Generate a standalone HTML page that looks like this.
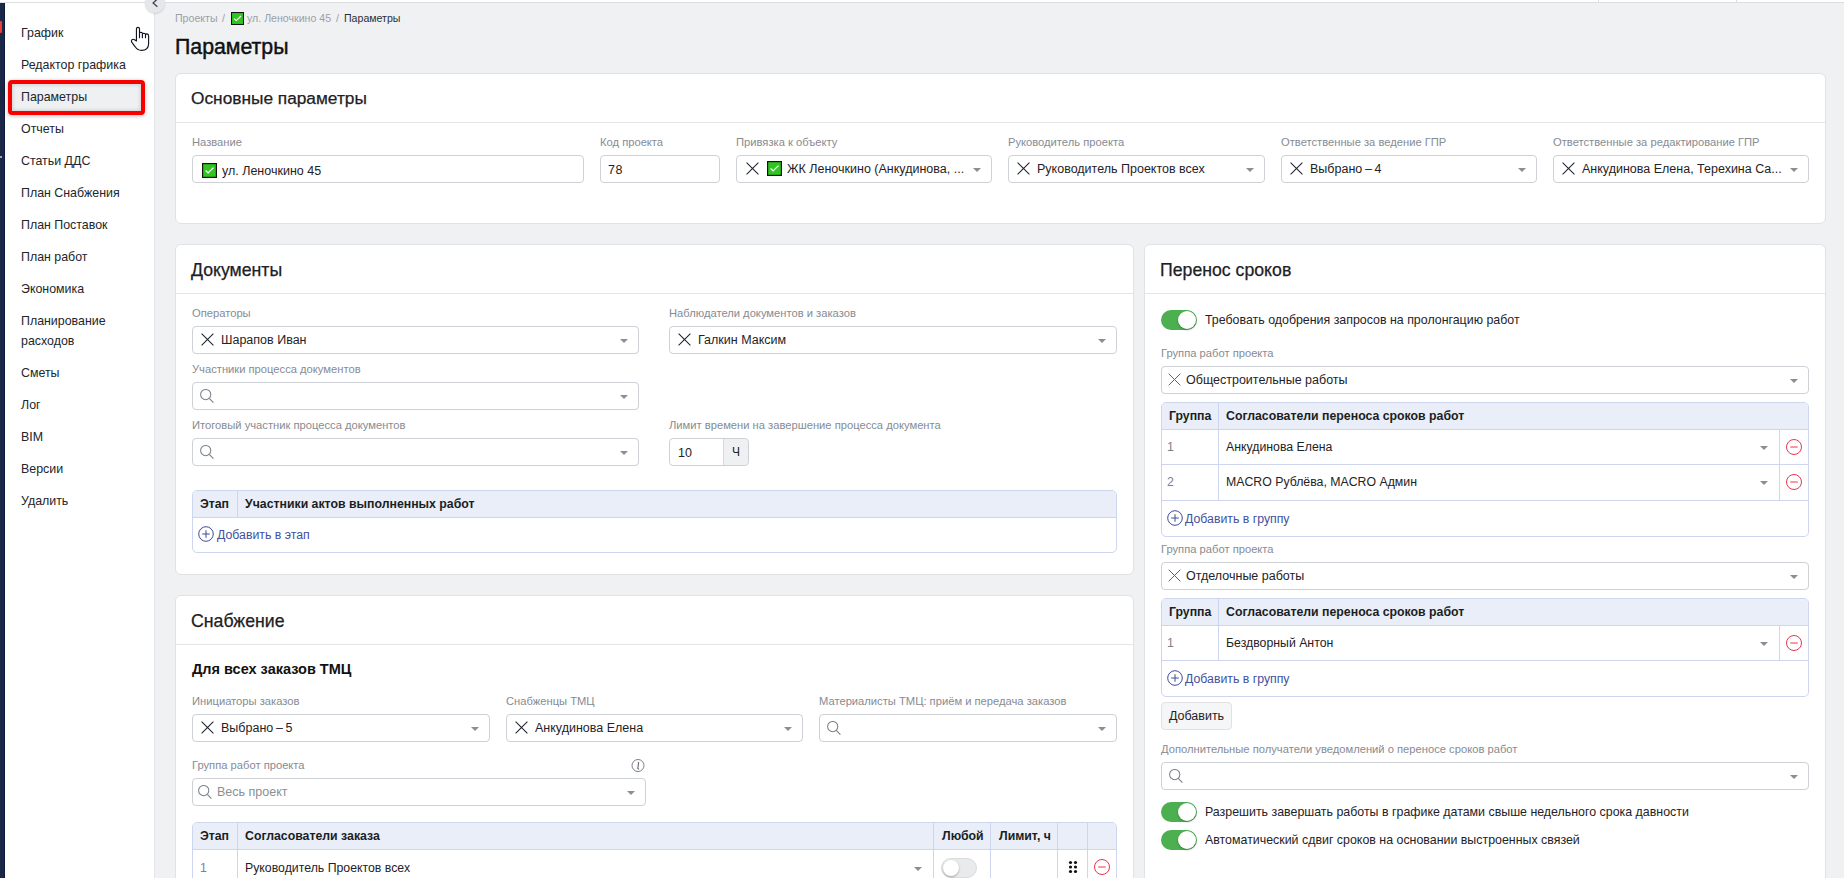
<!DOCTYPE html>
<html><head><meta charset="utf-8">
<style>
*{box-sizing:border-box;margin:0;padding:0}
html,body{width:1844px;height:878px;overflow:hidden}
body{position:relative;background:#f0f1f3;font-family:"Liberation Sans",sans-serif;color:#1f2226}
.a{position:absolute}
.topbar{left:0;top:0;width:1844px;height:3px;background:#fff;border-bottom:1px solid #dcdee2}
.dark{left:0;top:3px;width:5px;height:875px;background:#1b2746;border-right:1px solid #0e1a3c}
.side{left:5px;top:3px;width:150px;height:875px;background:#fff;border-right:1px solid #e3e5e8}
.nav{position:absolute;left:21px;margin-top:1px;font-size:12.4px;color:#22262b;line-height:20px;white-space:nowrap}
.card{position:absolute;background:#fff;border:1px solid #e0e2e6;border-radius:6px}
.ctitle{position:absolute;left:15px;top:13.5px;line-height:22px;font-size:17.7px;color:#1d2024;-webkit-text-stroke:0.25px #1d2024;white-space:nowrap}
.csep{position:absolute;left:0;right:0;top:48px;height:1px;background:#e3e5e8}
.lbl{position:absolute;font-size:11.2px;color:#868b93;white-space:nowrap;line-height:12px}
.inp{position:absolute;height:28px;border:1px solid #cdd0d5;border-radius:4px;background:#fff;display:flex;align-items:center;font-size:12.5px;color:#1f2226;white-space:nowrap;overflow:hidden}
.caret{position:absolute;right:10px;top:50%;margin-top:-1px;width:0;height:0;border-left:4px solid transparent;border-right:4px solid transparent;border-top:4px solid #8a8e96}
.xi{display:inline-block;width:13px;height:13px;margin-left:8px;margin-right:7px;flex:none;position:relative;top:-1px}
.chk{display:inline-block;width:15px;height:15px;flex:none}
.sr{display:inline-block;width:14px;height:14px;margin-left:7px;margin-top:-1px;flex:none}
.tbl{position:absolute;border:1px solid #cdd6ee;border-radius:5px;background:#fff;overflow:hidden}
.th{position:absolute;left:0;right:0;top:0;background:#e9eef8;border-bottom:1px solid #cdd6ee}
.vl{position:absolute;width:1px;background:#cdd6ee}
.hl{position:absolute;height:1px;background:#cdd6ee;left:0;right:0}
.tht{position:absolute;font-size:12.3px;font-weight:700;color:#1b1e22;white-space:nowrap;line-height:14px}
.td{position:absolute;font-size:12.3px;color:#1f2226;white-space:nowrap;line-height:14px}
.tdn{position:absolute;font-size:12.3px;color:#7d828a;white-space:nowrap;line-height:14px}
.lnk{position:absolute;font-size:12.3px;color:#4250a0;white-space:nowrap;line-height:14px}
.tog{position:absolute;width:36px;height:20px;border-radius:10px;background:#4caf50}
.tog i{position:absolute;right:1px;top:1px;width:18px;height:18px;border-radius:50%;background:#fff;box-shadow:0 1px 2px rgba(0,0,0,.3)}
.togoff{position:absolute;width:36px;height:20px;border-radius:10px;background:#e9eaec;border:1px solid #d9dbdf}
.togoff i{position:absolute;left:1px;top:1px;width:16px;height:16px;border-radius:50%;background:#fff;box-shadow:0 1px 2px rgba(0,0,0,.3)}
.ttxt{position:absolute;font-size:12.4px;color:#1f2226;white-space:nowrap;line-height:14px}
</style></head><body>
<svg width="0" height="0" style="position:absolute">
<defs>
<symbol id="ix" viewBox="0 0 13 13"><path d="M0.6 0.6 L12.4 12.4 M12.4 0.6 L0.6 12.4" stroke="#1d2230" stroke-width="1.05" fill="none"/></symbol>
<symbol id="ixl" viewBox="0 0 13 13"><path d="M0.7 0.7 L12.3 12.3 M12.3 0.7 L0.7 12.3" stroke="#5d6168" stroke-width="1" fill="none"/></symbol>
<symbol id="ichk" viewBox="0 0 15 15"><rect x="0.6" y="0.6" width="13.8" height="13.8" fill="#2fc71f" stroke="#141414" stroke-width="1.2"/><path d="M3.6 7.6 L6.1 9.9 L11.5 4.6" fill="none" stroke="#fff" stroke-width="1.3"/></symbol>
<symbol id="isr" viewBox="0 0 14 14"><circle cx="5.7" cy="5.6" r="5.1" fill="none" stroke="#7d8189" stroke-width="1.05"/><path d="M9.3 9.3 L13.4 13.6" stroke="#7d8189" stroke-width="1.1"/></symbol>
<symbol id="iplus" viewBox="0 0 16 16"><circle cx="8" cy="8" r="7.3" fill="none" stroke="#3f4b96" stroke-width="1"/><path d="M8 4.2 V11.8 M4.2 8 H11.8" stroke="#3f4b96" stroke-width="1"/></symbol>
<symbol id="iminus" viewBox="0 0 16 16"><circle cx="8" cy="8" r="7.5" fill="none" stroke="#e8344e" stroke-width="1"/><path d="M4.3 8 H11.7" stroke="#e8344e" stroke-width="1.1"/></symbol>
</defs></svg>
<div class="a topbar"></div>
<div class="a dark"></div>
<div class="a side"></div>
<div class="a" style="left:8px;top:80px;width:137px;height:35px;border:4px solid #f80000;border-radius:4px;box-shadow:0 1px 4px rgba(0,0,0,.25)"></div>
<div class="a" style="left:12px;top:84px;width:129px;height:27px;background:#eff0f2;box-shadow:inset 0 0 4px rgba(0,0,0,.2)"></div>
<div class="nav" style="top:22px">График</div>
<div class="nav" style="top:54px">Редактор графика</div>
<div class="nav" style="top:86px">Параметры</div>
<div class="nav" style="top:118px">Отчеты</div>
<div class="nav" style="top:150px">Статьи ДДС</div>
<div class="nav" style="top:182px">План Снабжения</div>
<div class="nav" style="top:214px">План Поставок</div>
<div class="nav" style="top:246px">План работ</div>
<div class="nav" style="top:278px">Экономика</div>
<div class="nav" style="top:310px">Планирование<br>расходов</div>
<div class="nav" style="top:362px">Сметы</div>
<div class="nav" style="top:394px">Лог</div>
<div class="nav" style="top:426px">BIM</div>
<div class="nav" style="top:458px">Версии</div>
<div class="nav" style="top:490px">Удалить</div>
<div class="a" style="left:0;top:21px;width:2px;height:12px;background:#ef3b36;border-radius:0 1px 1px 0"></div><div class="a" style="left:0;top:156px;width:2px;height:2px;background:#a0a6b4"></div>
<div class="a" style="left:145px;top:-7px;width:20px;height:20px;border-radius:50%;background:#e6e7ea;box-shadow:0 1px 2px rgba(0,0,0,.15)"></div>
<svg class="a" style="left:151px;top:-2px" width="9" height="11" viewBox="0 0 9 11"><path d="M6.4 1 L2.1 5 L6.4 8.8" fill="none" stroke="#45484f" stroke-width="1.35"/></svg>
<div class="a" style="left:175px;top:12px;font-size:10.6px;color:#9ba0a8;white-space:nowrap;line-height:13px">Проекты</div>
<div class="a" style="left:222px;top:12px;font-size:10.6px;color:#9ba0a8;white-space:nowrap;line-height:13px">/</div>
<svg class="a" style="left:231px;top:12px;width:13px;height:13px"><use href="#ichk"/></svg>
<div class="a" style="left:247px;top:12px;font-size:10.6px;color:#9ba0a8;white-space:nowrap;line-height:13px">ул. Леночкино 45</div>
<div class="a" style="left:336px;top:12px;font-size:10.6px;color:#9ba0a8;white-space:nowrap;line-height:13px">/</div>
<div class="a" style="left:344px;top:12px;font-size:10.6px;color:#9ba0a8;white-space:nowrap;line-height:13px;color:#2b2f35">Параметры</div>
<div class="a" style="left:175px;top:33.5px;font-size:21.3px;color:#0f1114;-webkit-text-stroke:0.45px #0f1114;white-space:nowrap;line-height:26px">Параметры</div>
<div class="card" style="left:175px;top:73px;width:1651px;height:151px">
<div class="ctitle" style="font-size:17.3px;top:13px">Основные параметры</div><div class="csep"></div>
<div class="lbl" style="left:16px;top:62px;">Название</div>
<div class="inp" style="left:16px;top:81px;width:392px;height:28px;padding-top:3px"><span style="margin-left:9px;display:flex"><svg class="chk"><use href="#ichk"/></svg></span><span style="margin-left:5px">ул. Леночкино 45</span></div>
<div class="lbl" style="left:424px;top:62px;">Код проекта</div>
<div class="inp" style="left:424px;top:81px;width:120px;height:28px;padding-top:1px"><span style="margin-left:7px;letter-spacing:0.6px">78</span></div>
<div class="lbl" style="left:560px;top:62px;">Привязка к объекту</div>
<div class="inp" style="left:560px;top:81px;width:256px;height:28px;"><svg class="xi" style="margin-left:9px;margin-right:8px"><use href="#ix"/></svg><span style="display:flex;margin-top:-2px"><svg class="chk"><use href="#ichk"/></svg></span><span style="margin-left:5px">ЖК Леночкино (Анкудинова, ...</span><i class="caret"></i></div>
<div class="lbl" style="left:832px;top:62px;">Руководитель проекта</div>
<div class="inp" style="left:832px;top:81px;width:257px;height:28px;"><svg class="xi"><use href="#ix"/></svg><span>Руководитель Проектов всех</span><i class="caret"></i></div>
<div class="lbl" style="left:1105px;top:62px;">Ответственные за ведение ГПР</div>
<div class="inp" style="left:1105px;top:81px;width:256px;height:28px;"><svg class="xi"><use href="#ix"/></svg><span style="word-spacing:-0.8px">Выбрано – 4</span><i class="caret"></i></div>
<div class="lbl" style="left:1377px;top:62px;">Ответственные за редактирование ГПР</div>
<div class="inp" style="left:1377px;top:81px;width:256px;height:28px;"><svg class="xi"><use href="#ix"/></svg><span>Анкудинова Елена, Терехина Са...</span><i class="caret"></i></div>
</div>
<div class="card" style="left:175px;top:244px;width:959px;height:331px">
<div class="ctitle">Документы</div><div class="csep"></div>
<div class="lbl" style="left:16px;top:62px;">Операторы</div>
<div class="inp" style="left:16px;top:81px;width:447px;height:28px;"><svg class="xi"><use href="#ix"/></svg><span>Шарапов Иван</span><i class="caret"></i></div>
<div class="lbl" style="left:493px;top:62px;">Наблюдатели документов и заказов</div>
<div class="inp" style="left:493px;top:81px;width:448px;height:28px;"><svg class="xi"><use href="#ix"/></svg><span>Галкин Максим</span><i class="caret"></i></div>
<div class="lbl" style="left:16px;top:118px;">Участники процесса документов</div>
<div class="inp" style="left:16px;top:137px;width:447px;height:28px;"><svg class="sr"><use href="#isr"/></svg><i class="caret"></i></div>
<div class="lbl" style="left:16px;top:174px;">Итоговый участник процесса документов</div>
<div class="inp" style="left:16px;top:193px;width:447px;height:28px;"><svg class="sr"><use href="#isr"/></svg><i class="caret"></i></div>
<div class="lbl" style="left:493px;top:174px;">Лимит времени на завершение процесса документа</div>
<div class="inp" style="left:493px;top:193px;width:80px;padding-top:2px"><span style="margin-left:8px">10</span><div class="a" style="left:53px;top:-1px;width:26px;height:28px;background:#eff0f2;border:1px solid #d5d7dc;border-radius:0 4px 4px 0;text-align:center;line-height:26px;font-size:12px;top:-1px">Ч</div></div>
<div class="tbl" style="left:16px;top:245px;width:925px;height:63px"><div class="th" style="height:27px"></div><div class="vl" style="left:44px;top:0;height:26px"></div><div class="tht" style="left:7px;top:6px">Этап</div><div class="tht" style="left:52px;top:6px">Участники актов выполненных работ</div><svg class="a" style="left:5px;top:35px;width:16px;height:16px"><use href="#iplus"/></svg><div class="lnk" style="left:24px;top:37px">Добавить в этап</div></div>
</div>
<div class="card" style="left:1144px;top:244px;width:682px;height:700px">
<div class="ctitle">Перенос сроков</div><div class="csep"></div>
<div class="tog" style="left:16px;top:65px"><i></i></div><div class="ttxt" style="left:60px;top:68px">Требовать одобрения запросов на пролонгацию работ</div>
<div class="lbl" style="left:16px;top:102px;">Группа работ проекта</div>
<div class="inp" style="left:16px;top:121px;width:648px;height:28px;"><svg class="xi" style="width:13px;height:13px;margin-left:6px;margin-right:5px"><use href="#ixl"/></svg><span>Общестроительные работы</span><i class="caret"></i></div>
<div class="tbl" style="left:16px;top:157px;width:648px;height:135px"><div class="th" style="height:27px"></div><div class="vl" style="left:56px;top:0;height:98px"></div><div class="tht" style="left:7px;top:6px">Группа</div><div class="tht" style="left:64px;top:6px">Согласователи переноса сроков работ</div><div class="hl" style="top:61px"></div><div class="vl" style="left:617px;top:27px;height:35px"></div><div class="tdn" style="left:5px;top:37px">1</div><div class="td" style="left:64px;top:37px">Анкудинова Елена</div><i class="caret" style="right:40px;top:43px;margin-top:0"></i><svg class="a" style="left:624px;top:36px;width:16px;height:16px"><use href="#iminus"/></svg><div class="hl" style="top:97px"></div><div class="vl" style="left:617px;top:62px;height:36px"></div><div class="tdn" style="left:5px;top:72px">2</div><div class="td" style="left:64px;top:72px">MACRO Рублёва, MACRO Админ</div><i class="caret" style="right:40px;top:78px;margin-top:0"></i><svg class="a" style="left:624px;top:71px;width:16px;height:16px"><use href="#iminus"/></svg><svg class="a" style="left:5px;top:107px;width:16px;height:16px"><use href="#iplus"/></svg><div class="lnk" style="left:23px;top:109px">Добавить в группу</div></div>
<div class="lbl" style="left:16px;top:298px;">Группа работ проекта</div>
<div class="inp" style="left:16px;top:317px;width:648px;height:28px;"><svg class="xi" style="width:13px;height:13px;margin-left:6px;margin-right:5px"><use href="#ixl"/></svg><span>Отделочные работы</span><i class="caret"></i></div>
<div class="tbl" style="left:16px;top:353px;width:648px;height:99px"><div class="th" style="height:27px"></div><div class="vl" style="left:56px;top:0;height:62px"></div><div class="tht" style="left:7px;top:6px">Группа</div><div class="tht" style="left:64px;top:6px">Согласователи переноса сроков работ</div><div class="hl" style="top:61px"></div><div class="vl" style="left:617px;top:27px;height:35px"></div><div class="tdn" style="left:5px;top:37px">1</div><div class="td" style="left:64px;top:37px">Бездворный Антон</div><i class="caret" style="right:40px;top:43px;margin-top:0"></i><svg class="a" style="left:624px;top:36px;width:16px;height:16px"><use href="#iminus"/></svg><svg class="a" style="left:5px;top:71px;width:16px;height:16px"><use href="#iplus"/></svg><div class="lnk" style="left:23px;top:73px">Добавить в группу</div></div>
<div class="a" style="left:16px;top:457px;width:71px;height:28px;border:1px solid #dfe1e5;border-radius:4px;background:#f5f6f7;font-size:12.5px;line-height:26px;text-align:center">Добавить</div>
<div class="lbl" style="left:16px;top:498px;">Дополнительные получатели уведомлений о переносе сроков работ</div>
<div class="inp" style="left:16px;top:517px;width:648px;height:28px;"><svg class="sr"><use href="#isr"/></svg><i class="caret"></i></div>
<div class="tog" style="left:16px;top:557px"><i></i></div><div class="ttxt" style="left:60px;top:560px">Разрешить завершать работы в графике датами свыше недельного срока давности</div>
<div class="tog" style="left:16px;top:585px"><i></i></div><div class="ttxt" style="left:60px;top:588px">Автоматический сдвиг сроков на основании выстроенных связей</div>
</div>
<div class="card" style="left:175px;top:595px;width:959px;height:400px">
<div class="ctitle">Снабжение</div><div class="csep"></div>
<div class="a" style="left:16px;top:65px;font-size:14.5px;font-weight:700;color:#111;white-space:nowrap;line-height:17px">Для всех заказов ТМЦ</div>
<div class="lbl" style="left:16px;top:99px;">Инициаторы заказов</div>
<div class="inp" style="left:16px;top:118px;width:298px;height:28px;"><svg class="xi"><use href="#ix"/></svg><span style="word-spacing:-0.8px">Выбрано – 5</span><i class="caret"></i></div>
<div class="lbl" style="left:330px;top:99px;">Снабженцы ТМЦ</div>
<div class="inp" style="left:330px;top:118px;width:297px;height:28px;"><svg class="xi"><use href="#ix"/></svg><span>Анкудинова Елена</span><i class="caret"></i></div>
<div class="lbl" style="left:643px;top:99px;">Материалисты ТМЦ: приём и передача заказов</div>
<div class="inp" style="left:643px;top:118px;width:298px;height:28px;"><svg class="sr"><use href="#isr"/></svg><i class="caret"></i></div>
<div class="lbl" style="left:16px;top:163px;">Группа работ проекта</div>
<svg class="a" style="left:455px;top:163px;width:14px;height:14px" viewBox="0 0 14 14"><circle cx="7" cy="6.5" r="6" fill="none" stroke="#7a7f87" stroke-width="1"/><path d="M7.7 3.3 L6.8 9.3 Q6.7 10.1 8.1 9.8 M6.7 3.5 L7.7 3.3" fill="none" stroke="#6a6f77" stroke-width="1.15"/></svg>
<div class="inp" style="left:16px;top:182px;width:454px;height:28px;"><svg class="sr" style="margin-left:5px"><use href="#isr"/></svg><span style="margin-left:5px;color:#8a8f97">Весь проект</span><i class="caret"></i></div>
<div class="tbl" style="left:16px;top:226px;width:925px;height:100px"><div class="th" style="height:27px"></div><div class="vl" style="left:44px;top:0;height:100px"></div><div class="vl" style="left:740px;top:0;height:100px"></div><div class="vl" style="left:797px;top:0;height:100px"></div><div class="vl" style="left:864px;top:0;height:100px"></div><div class="vl" style="left:894px;top:0;height:100px"></div><div class="tht" style="left:7px;top:6px">Этап</div><div class="tht" style="left:52px;top:6px">Согласователи заказа</div><div class="tht" style="left:749px;top:6px">Любой</div><div class="tht" style="left:806px;top:6px">Лимит, ч</div><div class="tdn" style="left:7px;top:38px">1</div><div class="td" style="left:52px;top:38px">Руководитель Проектов всех</div><i class="caret" style="left:721px;top:44px;margin-top:0"></i><div class="togoff" style="left:748px;top:35px"><i></i></div><svg class="a" style="left:875px;top:37px;width:10px;height:14px" viewBox="0 0 10 14"><circle cx="2.5" cy="2.5" r="1.6" fill="#111"/><circle cx="7.5" cy="2.5" r="1.6" fill="#111"/><circle cx="2.5" cy="7" r="1.6" fill="#111"/><circle cx="7.5" cy="7" r="1.6" fill="#111"/><circle cx="2.5" cy="11.5" r="1.6" fill="#111"/><circle cx="7.5" cy="11.5" r="1.6" fill="#111"/></svg><svg class="a" style="left:901px;top:36px;width:16px;height:16px"><use href="#iminus"/></svg></div>
</div>
<div class="a" style="left:1598px;top:0;width:1px;height:2px;background:#dcdee2"></div><div class="a" style="left:1736px;top:0;width:1px;height:2px;background:#dcdee2"></div>
<svg class="a" style="left:125px;top:22px" width="30" height="30" viewBox="0 0 30 30"><path d="M11.45 18.9 L11.45 6.8 Q11.45 5.3 13 5.3 Q14.5 5.3 14.5 6.8 L14.5 15.7 M14.5 10.9 Q14.6 10.3 16 10.3 Q17.4 10.4 17.4 11.6 L17.4 15.7 M17.4 11.9 Q17.5 11.2 19 11.2 Q20.5 11.3 20.5 12.5 L20.5 15.7 M20.5 12.6 Q20.7 11.9 22 11.9 Q23.6 12.1 23.6 13.8 L23.6 21.8 Q23.6 28.4 16.4 28.4 Q12.6 28.4 10.2 24.8 L6.7 20.2 Q5.9 18.8 6.9 17.8 Q8.2 16.8 9.6 17.7 L11.45 19" fill="#fff" stroke="#111522" stroke-width="1.15" stroke-linejoin="round" stroke-linecap="round"/></svg>
</body></html>
